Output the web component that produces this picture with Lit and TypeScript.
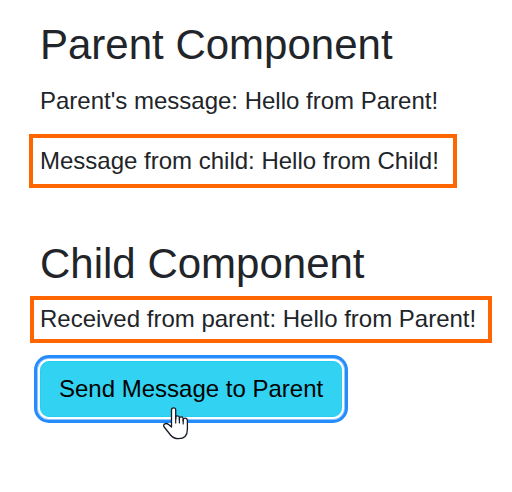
import { LitElement, html, css } from "lit";
import { customElement, property, state } from "lit/decorators.js";

const textStyles = css`
  :host {
    display: block;
  }
  .title {
    margin: 0;
    font-size: 42px;
    font-weight: 400;
    line-height: 50px;
  }
  .message {
    width: fit-content;
    margin: 0;
    line-height: 36px;
  }
  .framed {
    border: 4px solid #ff6600;
  }
`;

@customElement("child-panel")
export class ChildPanel extends LitElement {
  @property() received = "";

  static styles = [
    textStyles,
    css`
      .framed {
        margin: 7px 0 0 -10px;
        padding: 1px 12px 2px 6px;
      }
      .send {
        position: relative;
        display: block;
        margin-top: 18px;
        padding: 9px 18px;
        border: 1px solid #25cff2;
        border-radius: 9px;
        background: #31d2f2;
        color: #000;
        font: inherit;
        line-height: 36px;
        box-shadow: 0 0 0 2px #fff, 0 0 0 3px #92c5fd, 0 0 0 6px #258cfb;
        outline: none;
      }
      .pointer {
        position: absolute;
        left: 122px;
        top: 45px;
        width: 26px;
        height: 33px;
      }
    `,
  ];

  private send() {
    this.dispatchEvent(
      new CustomEvent("message-sent", { detail: "Hello from Child!" }),
    );
  }

  render() {
    return html`
      <h1 class="title">Child Component</h1>
      <p class="message framed">Received from parent: ${this.received}</p>
      <button class="send" type="button" @click=${this.send}>
        Send Message to Parent
        <svg class="pointer" viewBox="0 0 26 33" aria-hidden="true">
          <path
            d="M8.5 20V3Q8.5 .8 10.6 .8T12.7 3V12V10.5Q12.7 8.8 14.5 8.8T16.4 10.7V13V11.5Q16.4 9.8 18.2 9.8T20.2 11.7V14V12.8Q20.2 11.2 22.2 11.2T24.4 13.5V22Q24.4 31.7 15.6 31.7Q10.5 31.7 7.5 28L1.2 20Q-.1 17.8 1.8 16.8Q3.6 16 5.6 17.5Z"
            fill="#fff"
            stroke="#171b26"
            stroke-width="1.3"
            stroke-linejoin="round"
          />
          <path
            d="M12.7 10V16M16.4 11V16M20.2 12V17"
            fill="none"
            stroke="#171b26"
            stroke-width="1.2"
            stroke-linecap="round"
          />
        </svg>
      </button>
    `;
  }
}

@customElement("app-root")
export class AppRoot extends LitElement {
  @state() private childMessage = "Hello from Child!";

  private parentMessage = "Hello from Parent!";

  static styles = [
    textStyles,
    css`
      :host {
        padding: 20px 12px 72px 40px;
        background: #fff;
        color: #212529;
        font-family: "Liberation Sans", Arial, sans-serif;
        font-size: 24px;
      }
      .greeting {
        margin-top: 13px;
      }
      .framed {
        margin: 15px 0 0 -11px;
        padding: 5px 14px 5px 7px;
      }
      .child {
        margin-top: 51px;
      }
    `,
  ];

  private receive(event: CustomEvent<string>) {
    this.childMessage = event.detail;
  }

  render() {
    return html`
      <h1 class="title">Parent Component</h1>
      <p class="message greeting">Parent's message: ${this.parentMessage}</p>
      <p class="message framed">Message from child: ${this.childMessage}</p>
      <child-panel
        class="child"
        .received=${this.parentMessage}
        @message-sent=${this.receive}
      ></child-panel>
    `;
  }
}
